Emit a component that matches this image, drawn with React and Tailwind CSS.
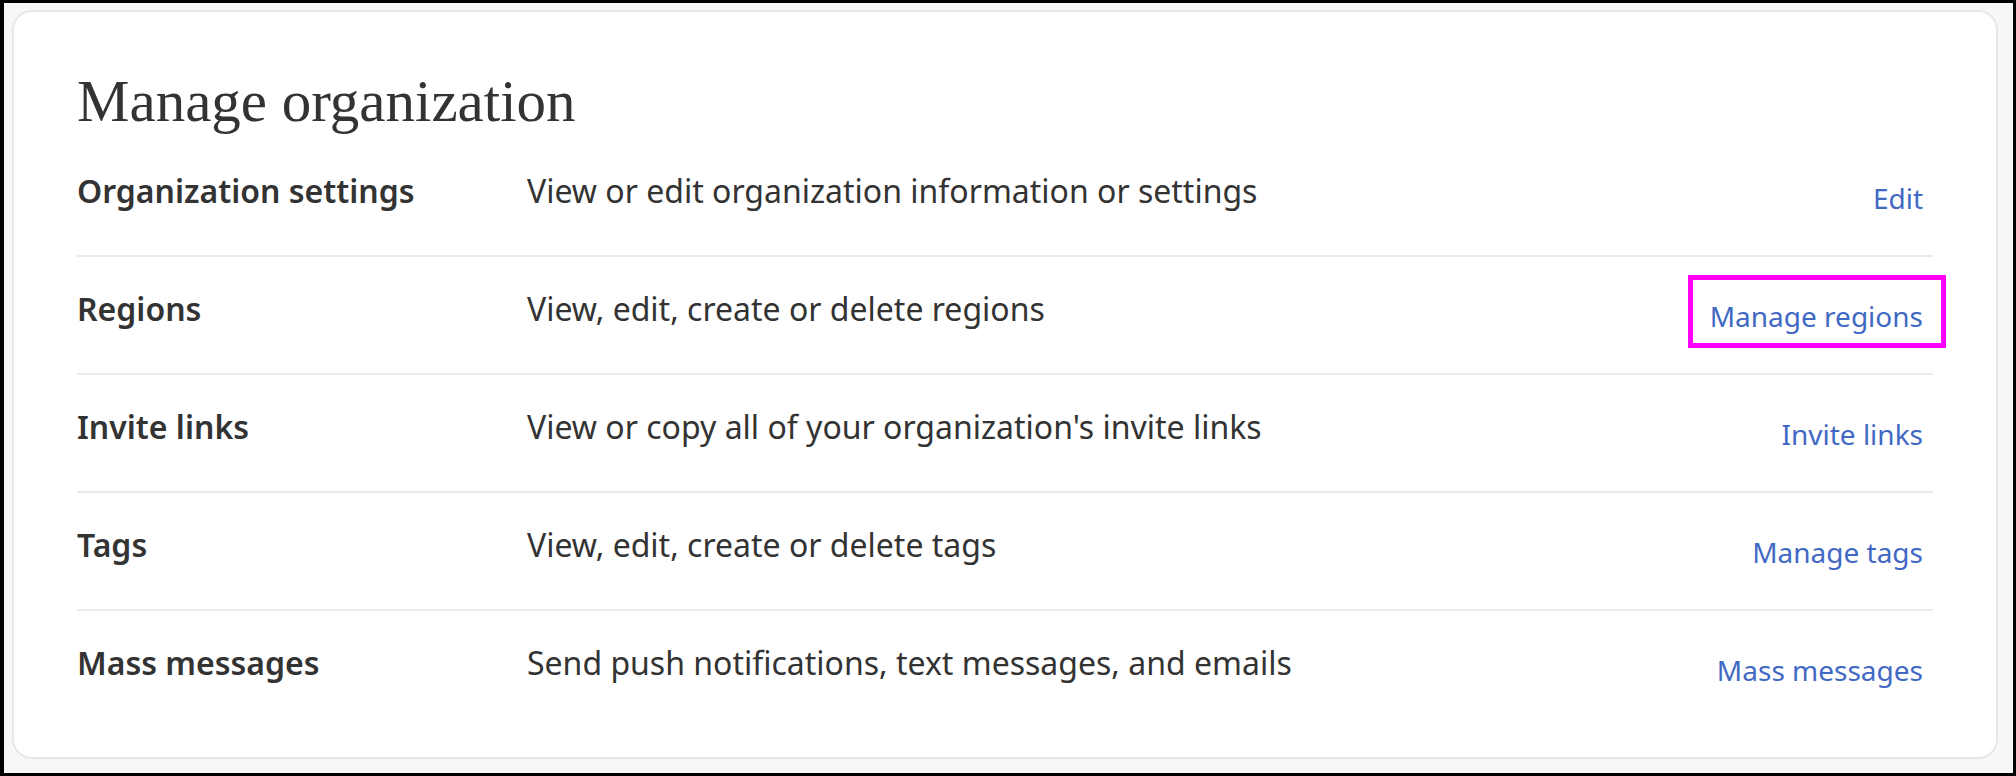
const rows = [
  {
    label: "Organization settings",
    text: "View or edit organization information or settings",
    link: "Edit",
  },
  {
    label: "Regions",
    text: "View, edit, create or delete regions",
    link: "Manage regions",
    highlight: true,
  },
  {
    label: "Invite links",
    text: "View or copy all of your organization's invite links",
    link: "Invite links",
  },
  {
    label: "Tags",
    text: "View, edit, create or delete tags",
    link: "Manage tags",
  },
  {
    label: "Mass messages",
    text: "Send push notifications, text messages, and emails",
    link: "Mass messages",
  },
];

function Row({ row, first }) {
  return (
    <div
      className={`flex items-start h-[118px] ${
        first ? "pt-[32px]" : "border-t-2 border-[#e9e9ee] pt-[30px]"
      }`}
    >
      <div className="w-[450px] shrink-0 text-[32px] leading-[44px] font-semibold text-[#333333]">
        {row.label}
      </div>
      <div className="flex-1 text-[32px] leading-[44px] text-[#333333]">
        {row.text}
      </div>
      <div className="pr-[10px] pt-[9px]">
        <a
          href="#"
          className="relative inline-block text-[28px] leading-[40px] text-[#4169c4]"
        >
          {row.link}
          {row.highlight && (
            <span className="absolute -left-[22px] -right-[23px] -top-[21px] -bottom-[12px] border-[5px] border-[#ff00ff]"></span>
          )}
        </a>
      </div>
    </div>
  );
}

export default function App() {
  return (
    <div
      className="flex h-[776px] w-full border-[3px] border-l-4 border-black bg-[#f7f7f8] pl-[8px] pt-[7px] pr-[15px] pb-[14px]"
      style={{ fontFamily: '"Noto Sans", "Open Sans", sans-serif' }}
    >
      <div className="flex-1 rounded-[20px] border-2 border-[#e6e6eb] bg-white px-[63px] pt-[60px]">
        <h1
          className="mb-[6px] text-[59px] leading-[59px] text-[#333333]"
          style={{ fontFamily: '"Liberation Serif", "DejaVu Serif", serif' }}
        >
          Manage organization
        </h1>
        {rows.map((row, i) => (
          <Row key={row.label} row={row} first={i === 0} />
        ))}
      </div>
    </div>
  );
}
